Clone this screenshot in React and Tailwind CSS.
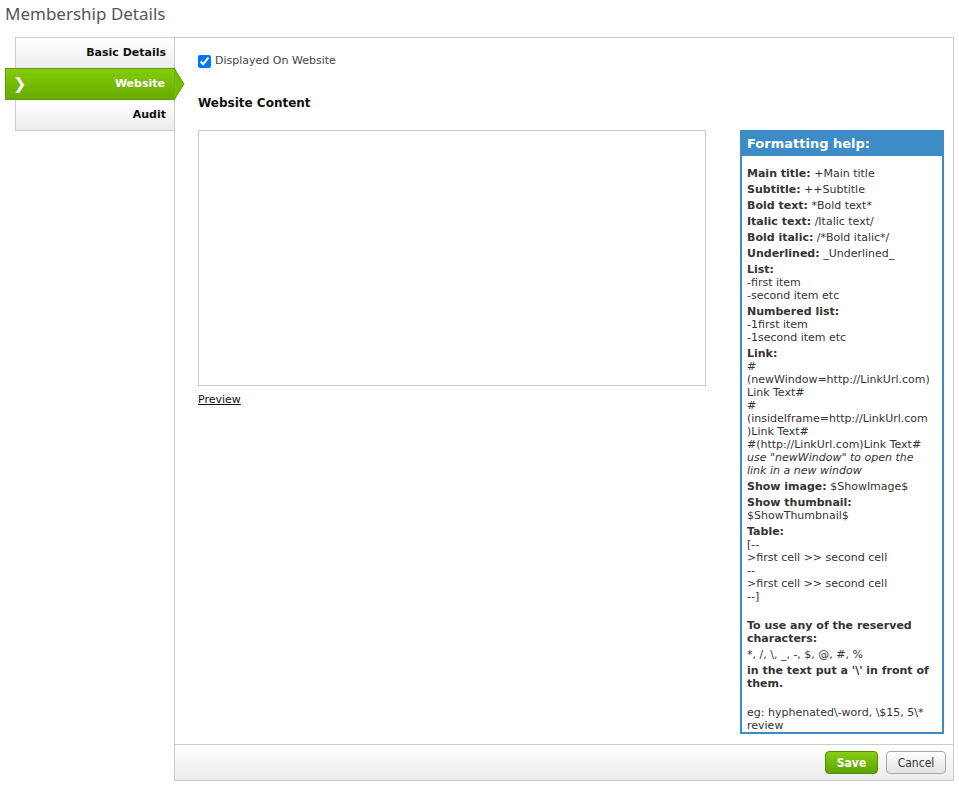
import React from 'react'

const verdana = { fontFamily: '"DejaVu Sans", Verdana, sans-serif' }
const tahoma = { fontFamily: 'Tahoma, "DejaVu Sans Condensed", "DejaVu Sans", sans-serif' }

function Tab({ label, active }) {
  if (active) {
    return (
      <div className="relative -ml-[11px] mr-[-1px] h-[32px] flex items-center justify-between pl-[7px] pr-[9px] bg-gradient-to-b from-[#84cc0c] to-[#68ab02] border border-[#5c9a06] text-white font-bold text-[11px]">
        <span className="text-[16px] font-bold leading-none">&#10095;</span>
        <span>{label}</span>
        <svg className="absolute -right-[11px] -top-[1px]" width="11" height="32" viewBox="0 0 11 32">
          <polygon points="0,0 10,16 0,32" fill="#76bd07" stroke="#5c9a06" strokeWidth="1" />
          <rect x="-1" y="1" width="1.5" height="30" fill="#76bd07" />
        </svg>
      </div>
    )
  }
  return (
    <div className="h-[30px] flex items-center justify-end pr-[8px] bg-gradient-to-b from-white to-[#ededed] text-[11px] font-bold text-[#111]">
      {label}
    </div>
  )
}

function Block({ children }) {
  return <div className="mb-[3px]">{children}</div>
}

function FormattingHelp() {
  return (
    <div className="w-[204px] shrink-0 border-2 border-[#3d8cc6] text-[11px] leading-[13px] text-[#333]" style={verdana}>
      <div className="bg-[#3d8cc6] text-white font-bold text-[13px] px-[5px] h-[24px] flex items-center">Formatting help:</div>
      <div className="px-[5px] pt-[11px] pb-0">
        <Block><b>Main title:</b> +Main title</Block>
        <Block><b>Subtitle:</b> ++Subtitle</Block>
        <Block><b>Bold text:</b> *Bold text*</Block>
        <Block><b>Italic text:</b> /Italic text/</Block>
        <Block><b>Bold italic:</b> /*Bold italic*/</Block>
        <Block><b>Underlined:</b> _Underlined_</Block>
        <Block><b>List:</b><br />-first item<br />-second item etc</Block>
        <Block><b>Numbered list:</b><br />-1first item<br />-1second item etc</Block>
        <Block>
          <b>Link:</b><br />#<br />(newWindow=http://LinkUrl.com)<br />Link Text#<br />#<br />(insideIframe=http://LinkUrl.com<br />)Link Text#<br />#(http://LinkUrl.com)Link Text#<br />
          <i>use "newWindow" to open the<br />link in a new window</i>
        </Block>
        <Block><b>Show image:</b> $ShowImage$</Block>
        <Block><b>Show thumbnail:</b><br />$ShowThumbnail$</Block>
        <Block>
          <b>Table:</b><br />[--<br />&gt;first cell &gt;&gt; second cell<br />--<br />&gt;first cell &gt;&gt; second cell<br />--]
        </Block>
        <Block><br /><b>To use any of the reserved<br />characters:</b></Block>
        <Block>*, /, \, _, -, $, @, #, %</Block>
        <Block><b>in the text put a '\' in front of<br />them.</b></Block>
        <div><br />eg: hyphenated\-word, \$15, 5\*<br />review</div>
      </div>
    </div>
  )
}

export default function App() {
  return (
    <div className="w-[959px] h-[786px] bg-white" style={verdana}>
      <h1 className="pl-[5px] pt-[1px] h-[37px] text-[17px] text-[#555]" style={{ fontFamily: '"Noto Sans", "Open Sans", sans-serif' }}>
        Membership Details
      </h1>
      <div className="flex ml-[15px] mr-[5px] h-[744px]">
        <div className="w-[159px] shrink-0 self-start border-l border-t border-b border-[#cccccc]">
          <Tab label="Basic Details" />
          <Tab label="Website" active />
          <Tab label="Audit" />
        </div>
        <div className="flex-1 flex flex-col border border-[#cccccc]">
          <div className="flex-1 pl-[23px] pr-[9px]">
            <label className="flex items-center gap-[4px] mt-[15px] text-[11px] text-[#444]">
              <input type="checkbox" defaultChecked className="w-[13px] h-[13px] m-0" />
              Displayed On Website
            </label>
            <div className="mt-[24px] text-[12px] font-bold text-[#111]">Website Content</div>
            <div className="flex gap-[34px] mt-[18px]">
              <div className="w-[508px]">
                <textarea className="block w-[508px] h-[256px] border border-[#cccccc] resize-none outline-none" />
                <a href="#" className="inline-block mt-[1px] text-[11px] text-[#111] underline">Preview</a>
              </div>
              <FormattingHelp />
            </div>
          </div>
          <div className="h-[36px] border-t border-[#cccccc] bg-gradient-to-b from-white to-[#ececec] flex items-center justify-end gap-[8px] pr-[7px]">
            <button className="h-[23px] w-[53px] rounded-[4px] border border-[#4f8d0b] bg-gradient-to-b from-[#86cf14] to-[#5ea300] text-white font-bold text-[12px]" style={tahoma}>
              Save
            </button>
            <button className="h-[23px] w-[60px] rounded-[4px] border border-[#a9a9a9] bg-gradient-to-b from-white to-[#e2e2e2] text-[#333] text-[12px]" style={tahoma}>
              Cancel
            </button>
          </div>
        </div>
      </div>
    </div>
  )
}
